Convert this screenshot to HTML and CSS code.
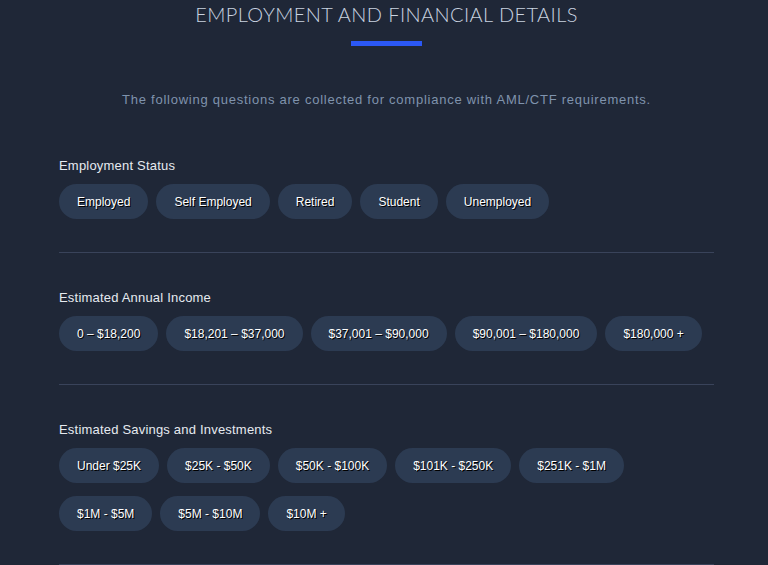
FILE: index.html
```html
<!DOCTYPE html>
<html lang="en">
<head>
  <meta charset="UTF-8" />
  <meta name="viewport" content="width=device-width, initial-scale=1.0" />
  <title>Employment and Financial Details</title>
  <link rel="stylesheet" href="styles.css">
</head>
<body>
  <div class="page">
    <h1>Employment and Financial Details</h1>
    <div class="title-bar"></div>
    <p class="intro">The following questions are collected for compliance with AML/CTF requirements.</p>

    <div class="question">
      <div class="question-label">Employment Status</div>
      <div class="options">
        <button type="button">Employed</button>
        <button type="button">Self Employed</button>
        <button type="button">Retired</button>
        <button type="button">Student</button>
        <button type="button">Unemployed</button>
      </div>
    </div>

    <div class="question">
      <div class="question-label">Estimated Annual Income</div>
      <div class="options">
        <button type="button">0 – $18,200</button>
        <button type="button">$18,201 – $37,000</button>
        <button type="button">$37,001 – $90,000</button>
        <button type="button">$90,001 – $180,000</button>
        <button type="button">$180,000 +</button>
      </div>
    </div>

    <div class="question">
      <div class="question-label">Estimated Savings and Investments</div>
      <div class="options">
        <button type="button">Under $25K</button>
        <button type="button">$25K - $50K</button>
        <button type="button">$50K - $100K</button>
        <button type="button">$101K - $250K</button>
        <button type="button">$251K - $1M</button>
        <button type="button">$1M - $5M</button>
        <button type="button">$5M - $10M</button>
        <button type="button">$10M +</button>
      </div>
    </div>
  </div>
</body>
</html>
```

FILE: styles.css
```css
body {
  margin: 0;
  background-color: #1f2737;
  color: #e6eaf0;
  font-family: 'Liberation Sans', Arial, sans-serif;
}
.page {
  padding: 0 54px 0 59px;
}
h1 {
  margin: 0;
  font-family: 'Lato', 'Liberation Sans', sans-serif;
  font-weight: 300;
  font-size: 20px;
  line-height: 28px;
  letter-spacing: 0.4px;
  text-align: center;
  text-transform: uppercase;
  color: #c9d3e0;
}
.title-bar {
  width: 71px;
  height: 5px;
  margin: 13px auto 0;
  background-color: #2b58f5;
}
.intro {
  margin: 45px 0 0;
  font-size: 13px;
  line-height: 18px;
  letter-spacing: 0.75px;
  text-align: center;
  color: #7f93ad;
}
.question {
  margin-top: 48px;
  padding-bottom: 33px;
  border-bottom: 1px solid #39435a;
}
.question + .question {
  margin-top: 36px;
}
.question-label {
  font-size: 13px;
  line-height: 18px;
  letter-spacing: 0.2px;
  color: #e6eaf0;
}
.options {
  display: flex;
  flex-wrap: wrap;
  gap: 13px 8px;
  margin-top: 9px;
}
.options button {
  height: 35px;
  padding: 0 18px;
  border: none;
  border-radius: 18px;
  background-color: #2c3b52;
  color: #ffffff;
  font-family: inherit;
  font-size: 12px;
  text-shadow: 1px 1px 0 #000;
  cursor: pointer;
}
.options button:hover {
  background-color: #34455f;
}
```
